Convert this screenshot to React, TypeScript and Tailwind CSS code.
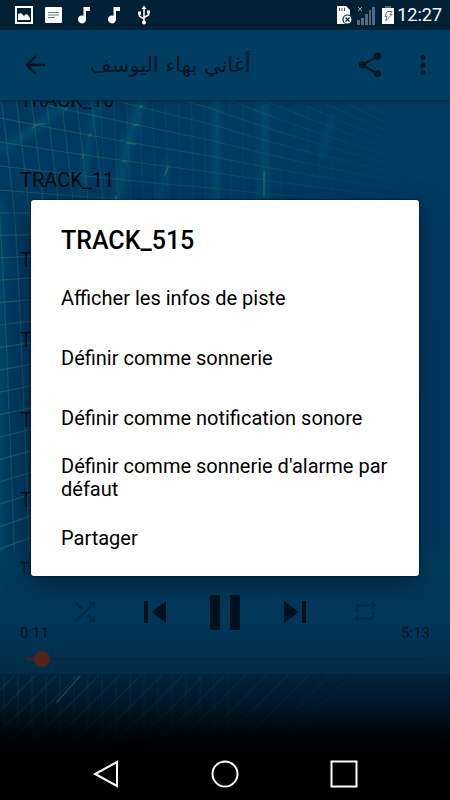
import React from 'react';

const tracks = ['TRACK_10', 'TRACK_11', 'TRACK_12', 'TRACK_13', 'TRACK_14', 'TRACK_15'];

const actions = [
  'Afficher les infos de piste',
  'Définir comme sonnerie',
  'Définir comme notification sonore',
  "Définir comme sonnerie d'alarme par défaut",
  'Partager',
];

function range(n: number) {
  return Array.from({ length: n }, (_, i) => i);
}

/* Pool floor tiles seen through rippling water. */
function PoolBackdrop() {
  return (
    <svg
      className="absolute inset-0 h-full w-full"
      viewBox="0 0 450 717"
      preserveAspectRatio="none"
      fill="none"
      aria-hidden="true"
    >
      <defs>
        <linearGradient id="water" x1="0" y1="0" x2="0" y2="1">
          <stop offset="0" stopColor="#003b62" />
          <stop offset="0.35" stopColor="#003860" />
          <stop offset="0.75" stopColor="#00385e" />
          <stop offset="0.9" stopColor="#002645" />
          <stop offset="1" stopColor="#001c32" />
        </linearGradient>
        <linearGradient id="tile" x1="0" y1="0" x2="450" y2="0" gradientUnits="userSpaceOnUse">
          <stop offset="0" stopColor="#2a6c68" stopOpacity="0.6" />
          <stop offset="0.5" stopColor="#146460" stopOpacity="0.5" />
          <stop offset="0.82" stopColor="#0a5664" stopOpacity="0.25" />
          <stop offset="1" stopColor="#0a5664" stopOpacity="0" />
        </linearGradient>
        <linearGradient id="depth" x1="0" y1="0" x2="0" y2="1">
          <stop offset="0.88" stopColor="#000" stopOpacity="0" />
          <stop offset="0.94" stopColor="#000" stopOpacity="0.35" />
          <stop offset="0.995" stopColor="#000" stopOpacity="0.96" />
        </linearGradient>
        <filter id="soft" filterUnits="userSpaceOnUse" x="-50" y="0" width="550" height="717">
          <feGaussianBlur stdDeviation="3" />
        </filter>
      </defs>
      <rect width="450" height="717" fill="url(#water)" />
      <g stroke="#00697a" strokeOpacity="0.4" filter="url(#soft)">
        <path d="M0 122L37 97L67 72" strokeWidth="7" />
        <path d="M78 180L90 105L100 60" strokeWidth="5" />
        <path d="M116 180L126 120L142 66" strokeWidth="9" />
        <path d="M158 180L168 130" strokeWidth="5" />
        <path d="M216 180V70M264 180V70" strokeWidth="7" />
        <path d="M321 130L332 85" strokeWidth="4" />
        <path d="M0 560V170" strokeWidth="10" strokeOpacity="0.25" />
      </g>
      <g stroke="url(#tile)" strokeWidth="1.2">
        {range(13).map((i) => {
          const k = i - 9;
          return (
            <path
              key={i}
              d={`M0 ${88 + 24 * k}Q105 ${109 + 20 * k} 210 ${126 + 16 * k}Q305 ${146 + 11 * k} 440 ${165 + 6 * k}`}
            />
          );
        })}
        {range(16).map((i) => {
          const y = 183 + i * 22.4;
          return <path key={i} d={`M0 ${y}L40 ${y - i}L120 ${y - i * 3}`} />;
        })}
        {range(9).map((i) => {
          const x = i * 15 - 30;
          return <path key={i} d={`M${x} 60Q${x + 9} 130 ${x + 14} 180T${x + 30} 540`} strokeOpacity="0.8" />;
        })}
        {range(20).map((i) => {
          const x = i * 13 + 100;
          return <path key={i} d={`M${x} 60L${x + 6 - i * 0.5} 180`} strokeOpacity="0.4" />;
        })}
        {range(17).map((i) => (
          <path key={i} d={`M${i * 21 - 60} 717Q${i * 21 - 24} 685 ${i * 21 - 2} 662L${i * 21 + 60} 600`} strokeOpacity="0.5" />
        ))}
        {range(17).map((i) => (
          <path key={i} d={`M${i * 14 + 4} 717V600`} strokeOpacity="0.35" />
        ))}
      </g>
      <g stroke="#4d806d" strokeOpacity="0.5" strokeWidth="1.5" strokeLinecap="round">
        <path d="M32 98L38 94L44 94M65 80L67 78M82 128L84 124M89 106L91 104M116 166V176M123 131L126 131M127 113L135 114M134 95L138 95M140 77L142 76M165 145L168 137M264 142V166M57 672L80 646" />
      </g>
      <rect width="450" height="717" fill="url(#depth)" />
    </svg>
  );
}

function StatusBar() {
  return (
    <header className="flex h-[30px] shrink-0 items-center justify-between bg-[#002035] pl-[15px] pr-2 text-white">
      <div className="flex items-center gap-3">
        <svg width="18" height="18" viewBox="0 0 18 18" fill="none" aria-hidden="true">
          <rect x="1" y="1" width="16" height="16" stroke="#fff" strokeWidth="2" />
          <path d="M3 14V8l3-1 3 3 2-2 2 1 2 3v2z" fill="#fff" />
        </svg>
        <svg width="17" height="18" viewBox="0 0 17 18" fill="none" aria-hidden="true">
          <rect y="1" width="17" height="16" rx="1" fill="#fff" />
          <path d="M3 6.5h11M3 9h11M3 11.5h7" stroke="#687780" />
        </svg>
        {[0, 1].map((n) => (
          <svg key={n} className="ml-1 mr-0.5" width="12" height="18" viewBox="0 0 12 18" fill="#fff" aria-hidden="true">
            <path d="M5.500 1H12v4H8v8.500A4 4 0 1 1 5.500 9.700z" />
          </svg>
        ))}
        <svg className="ml-1" width="12" height="20" viewBox="0 0 12 20" fill="none" stroke="#fff" strokeWidth="1.5" aria-hidden="true">
          <path d="M6 2v15M1.500 8v3L6 14M10.500 7v3L6 12.500" />
          <path d="M3.500 4L6 .5 8.500 4zM0 6.500h3v3H0zM9 5.500h3v3H9z" fill="#fff" stroke="none" />
          <circle cx="6" cy="17.5" r="2" fill="#fff" stroke="none" />
        </svg>
      </div>
      <div className="flex items-center">
        <svg className="mr-1" width="17" height="20" viewBox="0 0 17 20" fill="none" aria-hidden="true">
          <path d="M1 1h9l4 4v14H1z" fill="#fff" />
          <path d="M3.500 3v3M6 3v3M8.500 3v3" stroke="#44545e" />
          <circle cx="11.5" cy="14.5" r="4.5" fill="#fff" stroke="#002035" strokeWidth="1.2" />
          <path d="M9.500 12.500l4 4m0-4l-4 4" stroke="#002035" strokeWidth="1.3" />
        </svg>
        <svg className="mr-[7px]" width="18" height="20" viewBox="0 0 18 20" fill="#536b7c" aria-hidden="true">
          <path d="M0 15h3v5H0zM4 13h3v7H4zM8 9h3v11H8zM12 5h2v15h-2zM15 2h3v18h-3z" />
          <path d="M1 2l4 4m0-4L1 6" stroke="#8a9aa6" />
        </svg>
        <svg className="mr-0.5" width="13" height="20" viewBox="0 0 13 20" fill="none" aria-hidden="true">
          <path d="M3 1h6v3H3z" fill="#536b7c" />
          <rect y="3" width="12" height="16" fill="#fff" />
          <path d="M5 6.500h5L8 9.500h2L3.500 16l1.500-4.500H3z" stroke="#687780" />
        </svg>
        <time className="text-[18px] leading-6">12:27</time>
      </div>
    </header>
  );
}

function AppBar() {
  return (
    <div className="relative z-10 flex h-[70px] shrink-0 items-center bg-[#003d61] pl-5 pr-3 text-[#001624] shadow-[0_1px_4px_#001b2e]">
      <button type="button" aria-label="Retour">
        <svg width="30" height="30" viewBox="0 0 24 24" fill="currentColor">
          <path d="M20 11H7.830l5.590-5.590L12 4l-8 8 8 8 1.410-1.410L7.830 13H20v-2z" />
        </svg>
      </button>
      <h1 dir="rtl" className="ml-10 font-['DejaVu_Sans',sans-serif] text-[21px] leading-8">
        أغاني بهاء اليوسف
      </h1>
      <button type="button" aria-label="Partager" className="ml-auto">
        <svg width="30" height="30" viewBox="0 0 24 24" fill="currentColor">
          <path d="M18 16.080c-.76 0-1.440.3-1.960.77L8.910 12.700c.05-.23.09-.46.09-.7s-.04-.47-.09-.7l7.050-4.110c.54.5 1.250.81 2.040.81 1.660 0 3-1.340 3-3s-1.340-3-3-3-3 1.340-3 3c0 .24.040.47.090.7L8.040 9.810C7.500 9.310 6.790 9 6 9c-1.660 0-3 1.340-3 3s1.340 3 3 3c.79 0 1.500-.31 2.040-.81l7.120 4.160c-.05.21-.08.43-.08.65 0 1.610 1.310 2.920 2.920 2.920s2.920-1.310 2.920-2.920-1.310-2.920-2.920-2.920z" />
        </svg>
      </button>
      <button type="button" aria-label="Plus d'options" className="ml-[23px]">
        <svg width="30" height="30" viewBox="0 0 24 24" fill="currentColor">
          <circle cx="12" cy="6" r="2" />
          <circle cx="12" cy="12" r="2" />
          <circle cx="12" cy="18" r="2" />
        </svg>
      </button>
    </div>
  );
}

function Player() {
  const button = 'flex h-10 w-[70px] items-center justify-center';
  return (
    <section className="flex h-[123px] shrink-0 flex-col border-b border-[#002339] bg-[linear-gradient(#003b5eee,#00385aee_50%,#002d47ee)] pt-1 text-[#00121e]">
      <p className="px-5 text-[15px] leading-6">TRACK_515</p>
      <div className="mt-3 flex justify-center">
        <button type="button" aria-label="Aléatoire" className={`${button} text-[#002b45]`}>
          <svg width="30" height="30" viewBox="0 0 24 24" fill="currentColor">
            <path d="M10.590 9.170L5.410 4 4 5.410l5.170 5.170 1.420-1.410zM14.500 4l2.040 2.040L4 18.590 5.410 20 17.960 7.460 20 9.500V4h-5.500zm.33 9.410l-1.410 1.410 3.130 3.130L14.500 20H20v-5.500l-2.040 2.040-3.130-3.130z" />
          </svg>
        </button>
        <button type="button" aria-label="Précédent" className={button}>
          <svg width="24" height="24" viewBox="0 0 24 24" fill="currentColor">
            <path d="M1 1h4v22H1zM8 12L23 1v22z" />
          </svg>
        </button>
        <button type="button" aria-label="Pause" className={button}>
          <svg width="30" height="35" viewBox="0 0 30 35" fill="currentColor">
            <path d="M0 0h10v35H0zM20 0h10v35H20z" />
          </svg>
        </button>
        <button type="button" aria-label="Suivant" className={button}>
          <svg width="24" height="24" viewBox="0 0 24 24" fill="currentColor">
            <path d="M1 1l15 11L1 23zM19 1h4v22h-4z" />
          </svg>
        </button>
        <button type="button" aria-label="Répéter" className={`${button} text-[#002b45]`}>
          <svg width="30" height="30" viewBox="0 0 24 24" fill="currentColor">
            <path d="M5 6h12V3l4.200 3.700L17 10.500V7.500H6.500V12H5zM19 18H7v3l-4.200-3.700L7 13.500v3h10.500V12H19z" />
          </svg>
        </button>
      </div>
      <div className="-mt-[9px] flex justify-between px-5 text-[15px] leading-5">
        <span>0:11</span>
        <span>5:13</span>
      </div>
      <input
        type="range"
        aria-label="Position de lecture"
        min={0}
        max={313}
        defaultValue={11}
        className="mx-5 mt-2 h-4 appearance-none bg-transparent [&::-webkit-slider-runnable-track]:h-[2px] [&::-webkit-slider-runnable-track]:bg-[linear-gradient(to_right,transparent_6px,#4b2019_6px,#4b2019_22px,#00293f_22px,#00293f_calc(100%-7px),transparent_calc(100%-7px))] [&::-webkit-slider-thumb]:-mt-[7px] [&::-webkit-slider-thumb]:h-4 [&::-webkit-slider-thumb]:w-4 [&::-webkit-slider-thumb]:appearance-none [&::-webkit-slider-thumb]:rounded-full [&::-webkit-slider-thumb]:bg-[#57221a]"
      />
    </section>
  );
}

function TrackDialog() {
  return (
    <div className="absolute inset-0 z-20 flex items-center px-[31px] pb-px">
      <div
        role="dialog"
        aria-labelledby="dialog-title"
        className="w-full rounded-[3px] bg-white pb-2 text-black shadow-[0_0_2px_#000028,0_8px_24px_#00142899]"
      >
        <h2 id="dialog-title" className="px-[30px] pb-3 pt-[25px] text-[25px] font-medium leading-[31px]">
          TRACK_515
        </h2>
        <ul>
          {actions.map((label) => (
            <li key={label}>
              <button
                type="button"
                className="flex min-h-[60px] w-full items-center px-[30px] text-left text-[20px] leading-[23px]"
              >
                {label}
              </button>
            </li>
          ))}
        </ul>
      </div>
    </div>
  );
}

function NavBar() {
  const button = 'flex w-[119px] items-center justify-center';
  return (
    <nav className="flex h-[53px] shrink-0 justify-center bg-black">
      <button type="button" aria-label="Retour" className={button}>
        <svg width="28" height="28" viewBox="0 0 28 28" fill="none" stroke="#fff" strokeWidth="2">
          <path d="M25 2v24L3 14z" />
        </svg>
      </button>
      <button type="button" aria-label="Accueil" className={button}>
        <svg width="28" height="28" viewBox="0 0 28 28" fill="none" stroke="#fff" strokeWidth="2">
          <circle cx="14" cy="14" r="12.5" />
        </svg>
      </button>
      <button type="button" aria-label="Applications récentes" className={button}>
        <svg width="28" height="28" viewBox="0 0 28 28" fill="none" stroke="#fff" strokeWidth="2">
          <rect x="1.500" y="1.500" width="25" height="25" />
        </svg>
      </button>
    </nav>
  );
}

export default function App() {
  return (
    <div className="flex h-screen flex-col overflow-hidden bg-black font-[Roboto,sans-serif]">
      <StatusBar />
      <main className="relative flex min-h-0 flex-1 flex-col overflow-hidden">
        <PoolBackdrop />
        <div className="relative flex min-h-0 flex-1 flex-col pb-[72px]">
          <AppBar />
          <ul className="-mt-10 min-h-0 flex-1 overflow-hidden text-[20px] text-[#00080f]">
            {tracks.map((name) => (
              <li key={name} className="flex h-20 items-center px-5">
                {name}
              </li>
            ))}
          </ul>
          <Player />
        </div>
        <TrackDialog />
      </main>
      <NavBar />
    </div>
  );
}
